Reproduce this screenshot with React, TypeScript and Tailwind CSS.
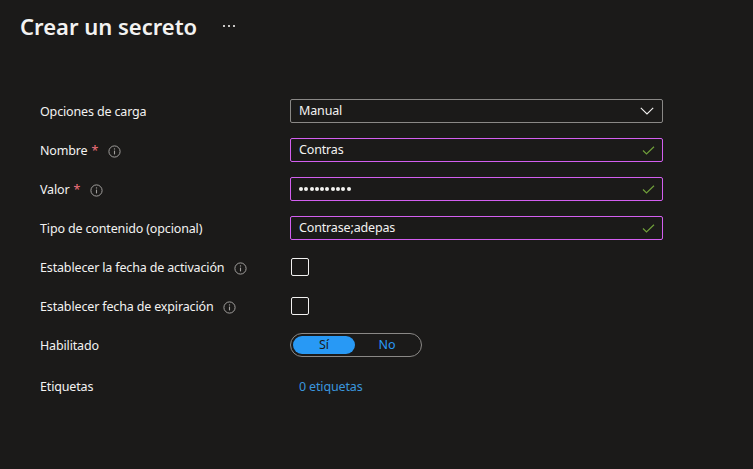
import React from "react";

function InfoIcon() {
  return (
    <svg width="13" height="13" viewBox="0 0 13 13" className="shrink-0">
      <circle cx="6.5" cy="6.5" r="5.6" fill="none" stroke="#a19f9d" strokeWidth="1" />
      <line x1="6.5" y1="5.6" x2="6.5" y2="9.4" stroke="#a19f9d" strokeWidth="1.1" />
      <circle cx="6.5" cy="3.9" r="0.7" fill="#a19f9d" />
    </svg>
  );
}

function Check() {
  return (
    <svg width="13" height="9" viewBox="0 0 13 9" className="shrink-0">
      <path d="M1 4.5 L4.5 8 L12 0.8" fill="none" stroke="#6f9e3a" strokeWidth="1.2" />
    </svg>
  );
}

function Label({ text, required, info, extra }: { text: string; required?: boolean; info?: boolean; extra?: string }) {
  return (
    <div className={`w-[250px] flex items-center text-[12.5px] tracking-[-0.15px] text-[#f3f2f1] pt-[2px] ${extra ?? ""}`}>
      <span>{text}</span>
      {required && <span className="ml-1 text-[#f1707b]">*</span>}
      {info && (
        <span className="ml-[10px] flex items-center">
          <InfoIcon />
        </span>
      )}
    </div>
  );
}

function TextBox({ children }: { children: React.ReactNode }) {
  return (
    <div className="w-[373px] h-[24px] border border-[#d35ff0] rounded-[2px] flex items-center justify-between pl-[8px] pr-[7px] text-[12.5px] tracking-[-0.15px] text-[#f3f2f1]">
      {children}
      <Check />
    </div>
  );
}

export default function App() {
  return (
    <div
      className="w-[753px] h-[469px] bg-[#1b1a19] text-[#f3f2f1] overflow-hidden"
      style={{ fontFamily: '"Segoe UI", "Noto Sans", sans-serif' }}
    >
      <div className="flex items-center pl-[20px] pt-[8px] h-[36px] box-content">
        <h1 className="text-[22px] font-semibold leading-none">Crear un secreto</h1>
        <span className="ml-[26px] flex gap-[3px] items-center">
          <span className="w-[2px] h-[2px] bg-[#c8c6c4]" />
          <span className="w-[2px] h-[2px] bg-[#c8c6c4]" />
          <span className="w-[2px] h-[2px] bg-[#c8c6c4]" />
        </span>
      </div>

      <div className="flex flex-col gap-[15px] pl-[40px] pt-[55px]">
        <div className="flex items-center h-[24px]">
          <Label text="Opciones de carga" />
          <div className="w-[373px] h-[24px] border border-[#8a8886] rounded-[2px] flex items-center justify-between pl-[8px] pr-[8px] text-[12.5px] tracking-[-0.15px]">
            <span>Manual</span>
            <svg width="14" height="8" viewBox="0 0 14 8">
              <path d="M0.8 0.8 L7 7 L13.2 0.8" fill="none" stroke="#f3f2f1" strokeWidth="1.1" />
            </svg>
          </div>
        </div>

        <div className="flex items-center h-[24px]">
          <Label text="Nombre" required info />
          <TextBox>
            <span>Contras</span>
          </TextBox>
        </div>

        <div className="flex items-center h-[24px]">
          <Label text="Valor" required info />
          <TextBox>
            <span className="flex gap-[1.3px] items-center">
              {Array.from({ length: 10 }).map((_, i) => (
                <span key={i} className="w-[4px] h-[4px] rounded-full bg-[#f3f2f1]" />
              ))}
            </span>
          </TextBox>
        </div>

        <div className="flex items-center h-[24px]">
          <Label text="Tipo de contenido (opcional)" />
          <TextBox>
            <span>Contrase;adepas</span>
          </TextBox>
        </div>

        <div className="flex items-center h-[24px]">
          <Label text="Establecer la fecha de activación" info />
          <div className="ml-[1px] w-[18px] h-[18px] border border-[#f3f2f1] rounded-[2px]" />
        </div>

        <div className="flex items-center h-[24px]">
          <Label text="Establecer fecha de expiración" info />
          <div className="ml-[1px] w-[18px] h-[18px] border border-[#f3f2f1] rounded-[2px]" />
        </div>

        <div className="flex items-center h-[24px]">
          <Label text="Habilitado" />
          <div className="w-[132px] h-[24px] border border-[#8a8886] rounded-full flex items-center p-[2px] text-[12.5px]">
            <div className="w-[62px] h-[18px] rounded-full bg-[#2899f5] text-[#1b1a19] flex items-center justify-center">
              Sí
            </div>
            <div className="flex-1 text-center text-[#2899f5]">No</div>
          </div>
        </div>

        <div className="flex items-center h-[24px]">
          <Label text="Etiquetas" extra="pt-[6px]" />
          <span className="pl-[9px] pt-[7px] text-[12.5px] tracking-[-0.15px] text-[#3a96dd]">0 etiquetas</span>
        </div>
      </div>
    </div>
  );
}
